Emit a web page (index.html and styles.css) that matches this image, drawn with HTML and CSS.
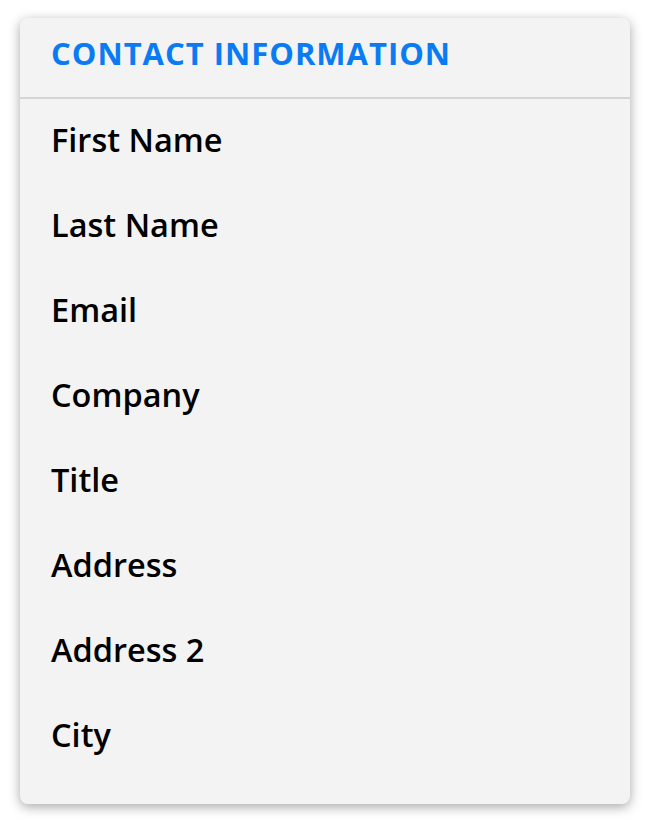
FILE: index.html
```html
<!DOCTYPE html>
<html lang="en">
<head>
    <meta charset="UTF-8">
    <meta name="viewport" content="width=device-width, initial-scale=1.0">
    <title>Contact Information</title>
    <link rel="stylesheet" href="styles.css">
</head>
<body>

    <div class="card">
        <div class="card-header">
            <h2>CONTACT INFORMATION</h2>
        </div>
        <ul class="field-list">
            <li>First Name</li>
            <li>Last Name</li>
            <li>Email</li>
            <li>Company</li>
            <li>Title</li>
            <li>Address</li>
            <li>Address 2</li>
            <li>City</li>
        </ul>
    </div>

</body>
</html>
```

FILE: styles.css
```css
* {
    margin: 0;
    padding: 0;
    box-sizing: border-box;
}

body {
    background: #ffffff;
    font-family: 'Open Sans', 'Noto Sans', sans-serif;
    padding: 18px 20px;
}

.card {
    background: #f3f3f3;
    border-radius: 8px;
    box-shadow: 0 3px 12px rgba(0, 0, 0, 0.35);
}

.card-header {
    padding: 15px 31px 24px;
    border-bottom: 2px solid #d5d5d5;
}

.card-header h2 {
    color: #0a7bf2;
    font-size: 31px;
    font-weight: 700;
    line-height: 40px;
    letter-spacing: 1px;
}

.field-list {
    list-style: none;
    padding-bottom: 27px;
}

.field-list li {
    padding: 0 31px;
    font-size: 32.5px;
    font-weight: 600;
    line-height: 85px;
    color: #000000;
}

.field-list li:first-child {
    margin-top: -2px;
}
```
